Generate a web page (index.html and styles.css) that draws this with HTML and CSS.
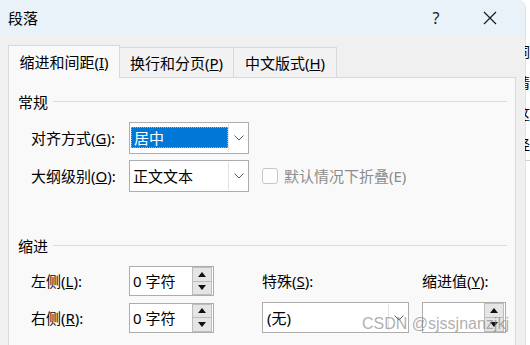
FILE: index.html
```html
<!DOCTYPE html>
<html lang="zh-CN">
  <head>
    <meta charset="UTF-8" />
    <meta name="viewport" content="width=device-width, initial-scale=1.0" />
    <title>段落</title>
    <link rel="stylesheet" href="styles.css">
  </head>
  <body>
    <div class="screen">
      <div class="dialog">
        <div class="titlebar">
          <span class="title">段落</span>
          <span class="tbtn help">?</span>
          <span class="tbtn close">
            <svg width="14" height="14" viewBox="0 0 14 14"><path d="M1 1 L13 13 M13 1 L1 13" stroke="#1a1a1a" stroke-width="1.2" fill="none"/></svg>
          </span>
        </div>
        <div class="content">
          <div class="tabs">
            <div class="tab active">缩进和间距(<u>I</u>)</div>
            <div class="tab t2">换行和分页(<u>P</u>)</div>
            <div class="tab t3">中文版式(<u>H</u>)</div>
          </div>
          <div class="panel">
            <div class="section"><span>常规</span><i class="rule"></i></div>

            <div class="row first">
              <label class="lbl">对齐方式(<u>G</u>):</label>
              <div class="combo">
                <div class="combo-text"><span class="selected">居中</span></div>
                <div class="drop">
                  <svg width="10" height="6" viewBox="0 0 10 6"><path d="M0.5 0.5 L5 5 L9.5 0.5" stroke="#5c5c5c" fill="none"/></svg>
                </div>
              </div>
            </div>

            <div class="row">
              <label class="lbl">大纲级别(<u>O</u>):</label>
              <div class="combo">
                <div class="combo-text">正文文本</div>
                <div class="drop">
                  <svg width="10" height="6" viewBox="0 0 10 6"><path d="M0.5 0.5 L5 5 L9.5 0.5" stroke="#5c5c5c" fill="none"/></svg>
                </div>
              </div>
              <span class="check"></span>
              <span class="disabled">默认情况下折叠(E)</span>
            </div>

            <div class="section indent-head"><span>缩进</span><i class="rule"></i></div>

            <div class="grid">
              <label class="lbl">左侧(<u>L</u>):</label>
              <div class="spin">
                <div class="spin-text">0 字符</div>
                <div class="spin-btns">
                  <span class="sb"><svg width="8" height="5" viewBox="0 0 8 5"><path d="M4 0 L8 5 L0 5 Z" fill="#111"/></svg></span>
                  <span class="sb"><svg width="8" height="5" viewBox="0 0 8 5"><path d="M0 0 L8 0 L4 5 Z" fill="#111"/></svg></span>
                </div>
              </div>
              <label class="lbl">特殊(<u>S</u>):</label>
              <label class="lbl">缩进值(<u>Y</u>):</label>

              <label class="lbl">右侧(<u>R</u>):</label>
              <div class="spin">
                <div class="spin-text">0 字符</div>
                <div class="spin-btns">
                  <span class="sb"><svg width="8" height="5" viewBox="0 0 8 5"><path d="M4 0 L8 5 L0 5 Z" fill="#111"/></svg></span>
                  <span class="sb"><svg width="8" height="5" viewBox="0 0 8 5"><path d="M0 0 L8 0 L4 5 Z" fill="#111"/></svg></span>
                </div>
              </div>
              <div class="combo special">
                <div class="combo-text">(无)</div>
                <div class="drop">
                  <svg width="10" height="6" viewBox="0 0 10 6"><path d="M0.5 0.5 L5 5 L9.5 0.5" stroke="#5c5c5c" fill="none"/></svg>
                </div>
              </div>
              <div class="spin value">
                <div class="spin-text"></div>
                <div class="spin-btns">
                  <span class="sb"><svg width="8" height="5" viewBox="0 0 8 5"><path d="M4 0 L8 5 L0 5 Z" fill="#111"/></svg></span>
                  <span class="sb"><svg width="8" height="5" viewBox="0 0 8 5"><path d="M0 0 L8 0 L4 5 Z" fill="#111"/></svg></span>
                </div>
              </div>
            </div>
          </div>
        </div>
      </div>
      <div class="behind">
        <span>词</span>
        <span>请</span>
        <span>这</span>
        <span>经</span>
        <i class="bline"></i>
      </div>
      <div class="watermark">CSDN @sjssjnanzjkj</div>
    </div>
  </body>
</html>
```

FILE: styles.css
```css
* {
  box-sizing: border-box;
}
body {
  margin: 0;
  font-family: "Noto Sans", "Noto Sans CJK SC", sans-serif;
  font-size: 15px;
  color: #000;
}
.screen {
  position: relative;
  width: 530px;
  height: 345px;
  overflow: hidden;
  display: flex;
  background: #fff;
}
.dialog {
  width: 525px;
  height: 345px;
  flex: none;
  background: #f0f0f0;
  border-top-right-radius: 8px;
  display: flex;
  flex-direction: column;
  box-shadow: 1px 0 0 #e2e2e2;
}
.titlebar {
  height: 35px;
  flex: none;
  background: #eaf2f9;
  border-top-right-radius: 8px;
  display: flex;
  align-items: center;
  padding-left: 8px;
}
.title {
  flex: 1;
  line-height: 20px;
}
.tbtn {
  width: 46px;
  height: 35px;
  display: flex;
  align-items: center;
  justify-content: center;
}
.help {
  font-size: 16px;
  color: #1a1a1a;
}
.close {
  margin-left: 8px;
  margin-right: 12px;
}
.content {
  padding: 10px 0 0 8px;
  flex: 1;
  display: flex;
  flex-direction: column;
}
.tabs {
  display: flex;
  align-items: flex-end;
  height: 32px;
  flex: none;
}
.tab {
  height: 30px;
  border: 1px solid #d9d9d9;
  border-bottom: none;
  background: #f2f2f2;
  display: flex;
  align-items: center;
  justify-content: center;
  line-height: 20px;
  white-space: nowrap;
}
.tab.active {
  width: 112px;
  height: 33px;
  margin-bottom: -1px;
  background: #f9f9f9;
  position: relative;
  z-index: 1;
}
.tab.t2 {
  width: 114px;
  border-left: none;
}
.tab.t3 {
  width: 103px;
  border-left: none;
}
.panel {
  width: 508px;
  flex: 1;
  background: #f9f9f9;
  border: 1px solid #d9d9d9;
  border-bottom: none;
  padding: 14px 8px 0 9px;
}
.section {
  height: 20px;
  display: flex;
  align-items: center;
  line-height: 20px;
}
.section .rule {
  flex: 1;
  height: 1px;
  background: #dcdcdc;
  margin-left: 5px;
  margin-top: -1px;
}
.indent-head {
  margin-top: 44px;
}
.row {
  display: flex;
  align-items: center;
  height: 32px;
  margin-top: 6px;
  padding-left: 13px;
}
.row.first {
  margin-top: 10px;
}
.lbl {
  line-height: 20px;
  white-space: nowrap;
}
.row .lbl {
  width: 98px;
  flex: none;
}
.combo {
  width: 120px;
  height: 32px;
  background: #fff;
  border: 1px solid #adadad;
  display: flex;
  flex: none;
}
.combo-text {
  flex: 1;
  display: flex;
  align-items: center;
  padding-left: 3px;
  line-height: 20px;
}
.selected {
  flex: 1;
  align-self: stretch;
  margin: 4px 0 5px -2px;
  padding-left: 3px;
  background: #0078d7;
  color: #fff;
  display: flex;
  align-items: center;
  outline: 1px dotted #f0a040;
  outline-offset: -1px;
}
.drop {
  width: 20px;
  flex: none;
  margin: 1px 0;
  border-left: 1px solid #e2e2e2;
  display: flex;
  align-items: center;
  justify-content: center;
}
.check {
  width: 16px;
  height: 16px;
  margin-left: 13px;
  border: 1px solid #c8c8c8;
  border-radius: 3px;
  background: #fdfdfd;
}
.disabled {
  margin-left: 6px;
  color: #8c8c8c;
  line-height: 20px;
}
.grid {
  display: grid;
  grid-template-columns: 98px 133px 160px 83px;
  grid-template-rows: 30px 31px;
  row-gap: 6px;
  margin-top: 10px;
  padding-left: 13px;
  align-items: center;
}
.spin {
  width: 85px;
  height: 30px;
  background: #fff;
  border: 1px solid #adadad;
  display: flex;
}
.spin.value {
  width: 84px;
  height: 31px;
}
.spin-text {
  flex: 1;
  padding-left: 3px;
  display: flex;
  align-items: center;
  line-height: 20px;
}
.spin-btns {
  width: 21px;
  flex: none;
  display: flex;
  flex-direction: column;
  padding: 0 1px 0 0;
}
.sb {
  flex: 1;
  background: #e5e5e5;
  border: 1px solid #bcbcbc;
  display: flex;
  align-items: center;
  justify-content: center;
}
.sb + .sb {
  border-top: none;
}
.combo.special {
  width: 147px;
  height: 31px;
}
.combo.special .combo-text {
  padding-left: 4px;
}
.behind {
  flex: 1;
  overflow: hidden;
  display: flex;
  flex-direction: column;
  padding-top: 44px;
  font-size: 14px;
  line-height: 16px;
  text-indent: -9px;
}
.behind span {
  height: 31px;
}
.bline {
  display: block;
  height: 1px;
  background: #d0d0d0;
  margin-top: -8px;
}
.watermark {
  position: absolute;
  left: 362px;
  top: 314px;
  font-family: "Liberation Sans", Arial, sans-serif;
  font-size: 16px;
  line-height: 20px;
  color: rgba(130, 130, 130, 0.65);
  white-space: nowrap;
}
```
